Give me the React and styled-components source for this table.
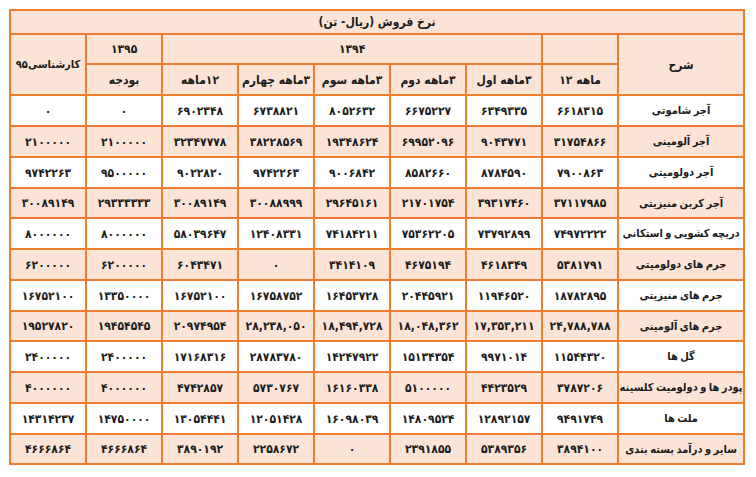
import React from "react";
import styled, { createGlobalStyle } from "styled-components";

const Global = createGlobalStyle`
  html, body { margin: 0; padding: 0; background: #ffffff; }
  body { font-family: "DejaVu Sans Condensed", "DejaVu Sans", sans-serif; }
`;

const Page = styled.div`
  padding: 9px 0 0 9px;
`;

const Table = styled.table`
  direction: rtl;
  border-collapse: collapse;
  table-layout: fixed;
  width: 736px;
  font-family: "DejaVu Sans Condensed", "DejaVu Sans", sans-serif;
  font-weight: bold;
  font-size: 12px;
  color: #1c1c1c;
  border: 2px solid #ed7d31;
`;

const Cell = styled.td`
  border: 2px solid #ed7d31;
  text-align: center;
  vertical-align: middle;
  padding: 0;
  white-space: nowrap;
  overflow: hidden;
  background: ${(p) => (p.$shade ? "#fbe4d5" : "#ffffff")};
`;

const HeadCell = styled(Cell)`
  background: #fbe4d5;
  font-size: ${(p) => (p.$small ? 11 : 12)}px;
`;

const TitleCell = styled.td`
  border: 2px solid #ed7d31;
  background: #fbe4d5;
  text-align: center;
  padding: 0;
  font-size: 12px;
`;

const Row = styled.tr`
  height: ${(p) => p.$h}px;
`;

const NameCell = styled(Cell)`
  font-size: 11px;
  word-spacing: -1px;
`;

const rows = [
  ["آجر شاموتی", "۶۶۱۸۳۱۵", "۶۳۴۹۳۳۵", "۶۶۷۵۲۲۷", "۸۰۵۲۶۳۲", "۶۷۳۸۸۲۱", "۶۹۰۲۳۴۸", "۰", "۰"],
  ["آجر آلومینی", "۳۱۷۵۴۸۶۶", "۹۰۴۳۷۷۱", "۶۹۹۵۲۰۹۶", "۱۹۳۴۸۶۲۴", "۳۸۲۲۸۵۶۹", "۳۲۳۴۷۷۷۸", "۲۱۰۰۰۰۰", "۲۱۰۰۰۰۰"],
  ["آجر دولومیتی", "۷۹۰۰۸۶۳", "۸۷۸۴۵۹۰", "۸۵۸۲۶۶۰", "۹۰۰۶۸۴۲", "۹۷۴۲۲۶۳", "۹۰۲۲۸۲۰", "۹۵۰۰۰۰۰", "۹۷۴۲۲۶۳"],
  ["آجر کربن منیزیتی", "۳۷۱۱۷۹۸۵", "۳۹۳۱۷۴۶۰", "۲۱۷۰۱۷۵۴", "۲۹۶۴۵۱۶۱", "۳۰۰۸۸۹۹۹", "۳۰۰۸۹۱۴۹", "۲۹۳۳۳۳۳۳", "۳۰۰۸۹۱۴۹"],
  ["دریچه کشویی و استکانی", "۷۴۹۷۲۲۲۲", "۷۳۷۹۲۸۹۹", "۷۵۳۶۲۲۰۵", "۷۴۱۸۴۲۱۱", "۱۲۴۰۸۳۳۱", "۵۸۰۳۹۶۴۷", "۸۰۰۰۰۰۰", "۸۰۰۰۰۰۰"],
  ["جرم های دولومیتی", "۵۳۸۱۷۹۱", "۴۶۱۸۳۴۹", "۴۶۷۵۱۹۴", "۳۴۱۴۱۰۹", "۰", "۶۰۴۳۴۷۱", "۶۲۰۰۰۰۰", "۶۲۰۰۰۰۰"],
  ["جرم های منیزیتی", "۱۸۷۸۲۸۹۵", "۱۱۹۴۶۵۲۰", "۲۰۴۴۵۹۲۱", "۱۶۴۵۳۷۲۸", "۱۶۷۵۸۷۵۲", "۱۶۷۵۲۱۰۰", "۱۳۳۵۰۰۰۰", "۱۶۷۵۲۱۰۰"],
  ["جرم های آلومینی", "۲۴,۷۸۸,۷۸۸", "۱۷,۳۵۳,۲۱۱", "۱۸,۰۴۸,۳۶۲", "۱۸,۴۹۴,۷۲۸", "۲۸,۲۳۸,۰۵۰", "۲۰۹۷۴۹۵۴", "۱۹۴۵۴۵۴۵", "۱۹۵۲۷۸۲۰"],
  ["گل ها", "۱۱۵۴۴۳۲۰", "۹۹۷۱۰۱۴", "۱۵۱۳۴۳۵۴", "۱۴۲۴۷۹۲۲", "۲۸۷۸۳۷۸۰", "۱۷۱۶۸۳۱۶", "۲۴۰۰۰۰۰", "۲۴۰۰۰۰۰"],
  ["پودر ها و دولومیت کلسینه", "۳۷۸۷۲۰۶", "۴۴۲۳۵۲۹", "۵۱۰۰۰۰۰", "۱۶۱۶۰۳۳۸", "۵۷۳۰۷۶۷", "۴۷۴۲۸۵۷", "۴۰۰۰۰۰۰", "۴۰۰۰۰۰۰"],
  ["ملت ها", "۹۴۹۱۷۴۹", "۱۲۸۹۲۱۵۷", "۱۴۸۰۹۵۲۴", "۱۶۰۹۸۰۳۹", "۱۲۰۵۱۴۲۸", "۱۳۰۵۴۴۴۱", "۱۴۷۵۰۰۰۰", "۱۴۳۱۴۲۳۷"],
  ["سایر و درآمد بسته بندی", "۳۸۹۴۱۰۰", "۵۳۸۹۳۵۶", "۲۳۹۱۸۵۵", "۰", "۲۲۵۸۶۷۲", "۳۸۹۰۱۹۲", "۴۶۶۶۸۶۴", "۴۶۶۶۸۶۴"],
];

const widths = [126, 76, 76, 76, 76, 76, 76, 76, 76];
const rowHeights = [31, 31, 31, 30, 31, 31, 31, 30, 31, 31, 31, 30];

export default function App() {
  return (
    <>
      <Global />
      <Page>
        <Table>
          <colgroup>
            {widths.map((w, i) => (
              <col key={i} style={{ width: w }} />
            ))}
          </colgroup>
          <tbody>
            <Row $h={24}>
              <TitleCell colSpan={9}>نرخ فروش (ریال- تن)</TitleCell>
            </Row>
            <Row $h={30}>
              <HeadCell rowSpan={2}>شرح</HeadCell>
              <HeadCell></HeadCell>
              <HeadCell colSpan={5}>۱۳۹۴</HeadCell>
              <HeadCell>۱۳۹۵</HeadCell>
              <HeadCell rowSpan={2} $small>
                کارشناسی۹۵
              </HeadCell>
            </Row>
            <Row $h={31}>
              <HeadCell>ماهه ۱۲</HeadCell>
              <HeadCell>۳ماهه اول</HeadCell>
              <HeadCell>۳ماهه دوم</HeadCell>
              <HeadCell>۳ماهه سوم</HeadCell>
              <HeadCell>۳ماهه چهارم</HeadCell>
              <HeadCell>۱۲ماهه</HeadCell>
              <HeadCell>بودجه</HeadCell>
            </Row>
            {rows.map((r, i) => (
              <Row key={i} $h={rowHeights[i]}>
                <NameCell $shade={i % 2 === 1}>{r[0]}</NameCell>
                {r.slice(1).map((v, j) => (
                  <Cell key={j} $shade={i % 2 === 1}>
                    {v}
                  </Cell>
                ))}
              </Row>
            ))}
          </tbody>
        </Table>
      </Page>
    </>
  );
}
